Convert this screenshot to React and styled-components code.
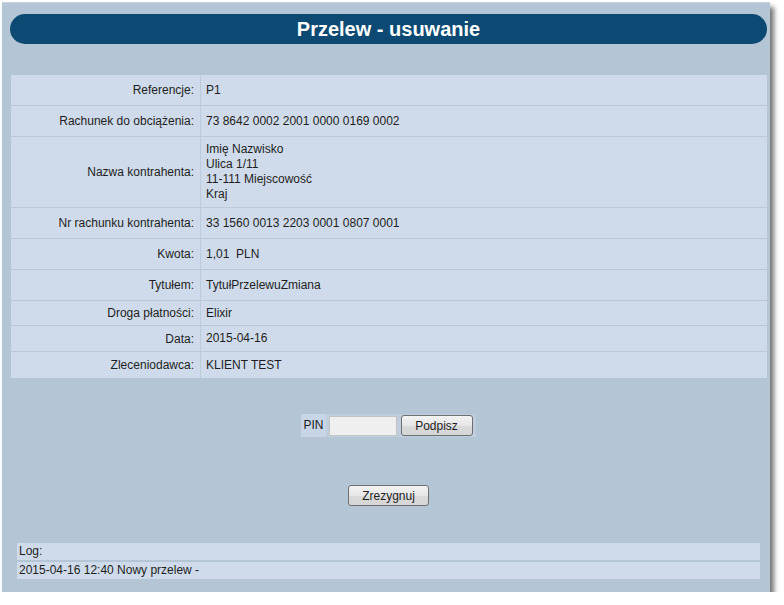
import React from "react";
import styled, {createGlobalStyle} from "styled-components";

const GlobalStyle = createGlobalStyle`
    body {
        margin: 0;
        background: #ffffff;
        font-family: "Liberation Sans", Arial, sans-serif;
    }
`

const Panel = styled.div`
    margin: 2px 0 0 2px;
    width: 768px;
    height: 590px;
    box-sizing: border-box;
    background-color: #b4c6d6;
    border-top: 1px solid #c9d6e2;
    box-shadow: 4px 5px 5px rgba(0, 0, 0, 0.55);
    display: flex;
    flex-direction: column;
    padding: 11px 3px 0 8px;
`

const Header = styled.h1`
    margin: 0;
    height: 30px;
    border-radius: 15px;
    background-color: #0c4a73;
    color: #ffffff;
    font-size: 20px;
    font-weight: bold;
    line-height: 30px;
    text-align: center;
`

const Table = styled.table`
    margin: 31px 0 0 1px;
    width: 756px;
    border-collapse: collapse;
    background-color: #cfdbea;
    font-size: 12px;
    color: #1e1e1e;
`

const Row = styled.tr`
    height: ${props => props.h}px;
    border-bottom: 1px solid #b9c9da;
    &:last-child {
        border-bottom: none;
    }
`

const LabelCell = styled.td`
    width: 183px;
    padding: 1px 6px 0 0;
    text-align: right;
    border-right: 1px solid #bccbdc;
`

const ValueCell = styled.td`
    padding: 1px 0 0 5px;
    line-height: 15px;
`

const SignForm = styled.div`
    margin-top: 36px;
    display: flex;
    justify-content: center;
`

const PinLabel = styled.span`
    background-color: #c8d5e6;
    font-size: 12px;
    color: #1e1e1e;
    padding: 0 2px;
    height: 23px;
    line-height: 23px;
`

const PinGroup = styled.span`
    background-color: #bfcddc;
    display: flex;
    align-items: center;
    gap: 4px;
    padding: 0 3px;
    height: 23px;
`

const PinInput = styled.input`
    box-sizing: border-box;
    width: 68px;
    height: 20px;
    border: 1px solid #c4c4c4;
    background: #efefef;
    padding: 0;
`

const Button = styled.button`
    box-sizing: border-box;
    width: ${props => props.w}px;
    height: 21px;
    padding: 0;
    border: 1px solid #707070;
    border-radius: 3px;
    background: linear-gradient(#f3f3f3, #e6e6e6 50%, #dadada 51%, #d6d6d6);
    font-family: "Liberation Sans", Arial, sans-serif;
    font-size: 12px;
    color: #1e1e1e;
`

const CancelRow = styled.div`
    margin-top: 48px;
    display: flex;
    justify-content: center;
`

const Log = styled.div`
    margin: 37px 7px 0 7px;
    display: flex;
    flex-direction: column;
    gap: 2px;
`

const LogLine = styled.div`
    height: 17px;
    line-height: 17px;
    background-color: #cfdbea;
    font-size: 12px;
    color: #1e1e1e;
    padding-left: 2px;
`

const rows = [
    {label: "Referencje:", value: ["P1"], h: 30},
    {label: "Rachunek do obciążenia:", value: ["73 8642 0002 2001 0000 0169 0002"], h: 31},
    {label: "Nazwa kontrahenta:", value: ["Imię Nazwisko", "Ulica 1/11", "11-111 Miejscowość", "Kraj"], h: 71},
    {label: "Nr rachunku kontrahenta:", value: ["33 1560 0013 2203 0001 0807 0001"], h: 31},
    {label: "Kwota:", value: ["1,01\u00a0 PLN"], h: 31},
    {label: "Tytułem:", value: ["TytułPrzelewuZmiana"], h: 31},
    {label: "Droga płatności:", value: ["Elixir"], h: 25},
    {label: "Data:", value: ["2015-04-16"], h: 26},
    {label: "Zleceniodawca:", value: ["KLIENT TEST"], h: 27},
]

function App() {
    return (
        <>
            <GlobalStyle />
            <Panel>
                <Header>Przelew - usuwanie</Header>
                <Table>
                    <tbody>
                        {rows.map(r => (
                            <Row key={r.label} h={r.h}>
                                <LabelCell>{r.label}</LabelCell>
                                <ValueCell>
                                    {r.value.map((v, i) => <div key={i}>{v}</div>)}
                                </ValueCell>
                            </Row>
                        ))}
                    </tbody>
                </Table>
                <SignForm>
                    <PinLabel>PIN</PinLabel>
                    <PinGroup>
                        <PinInput type="password" />
                        <Button w={72}>Podpisz</Button>
                    </PinGroup>
                </SignForm>
                <CancelRow>
                    <Button w={81}>Zrezygnuj</Button>
                </CancelRow>
                <Log>
                    <LogLine>Log:</LogLine>
                    <LogLine>2015-04-16 12:40 Nowy przelew -</LogLine>
                </Log>
            </Panel>
        </>
    )
}

export default App
